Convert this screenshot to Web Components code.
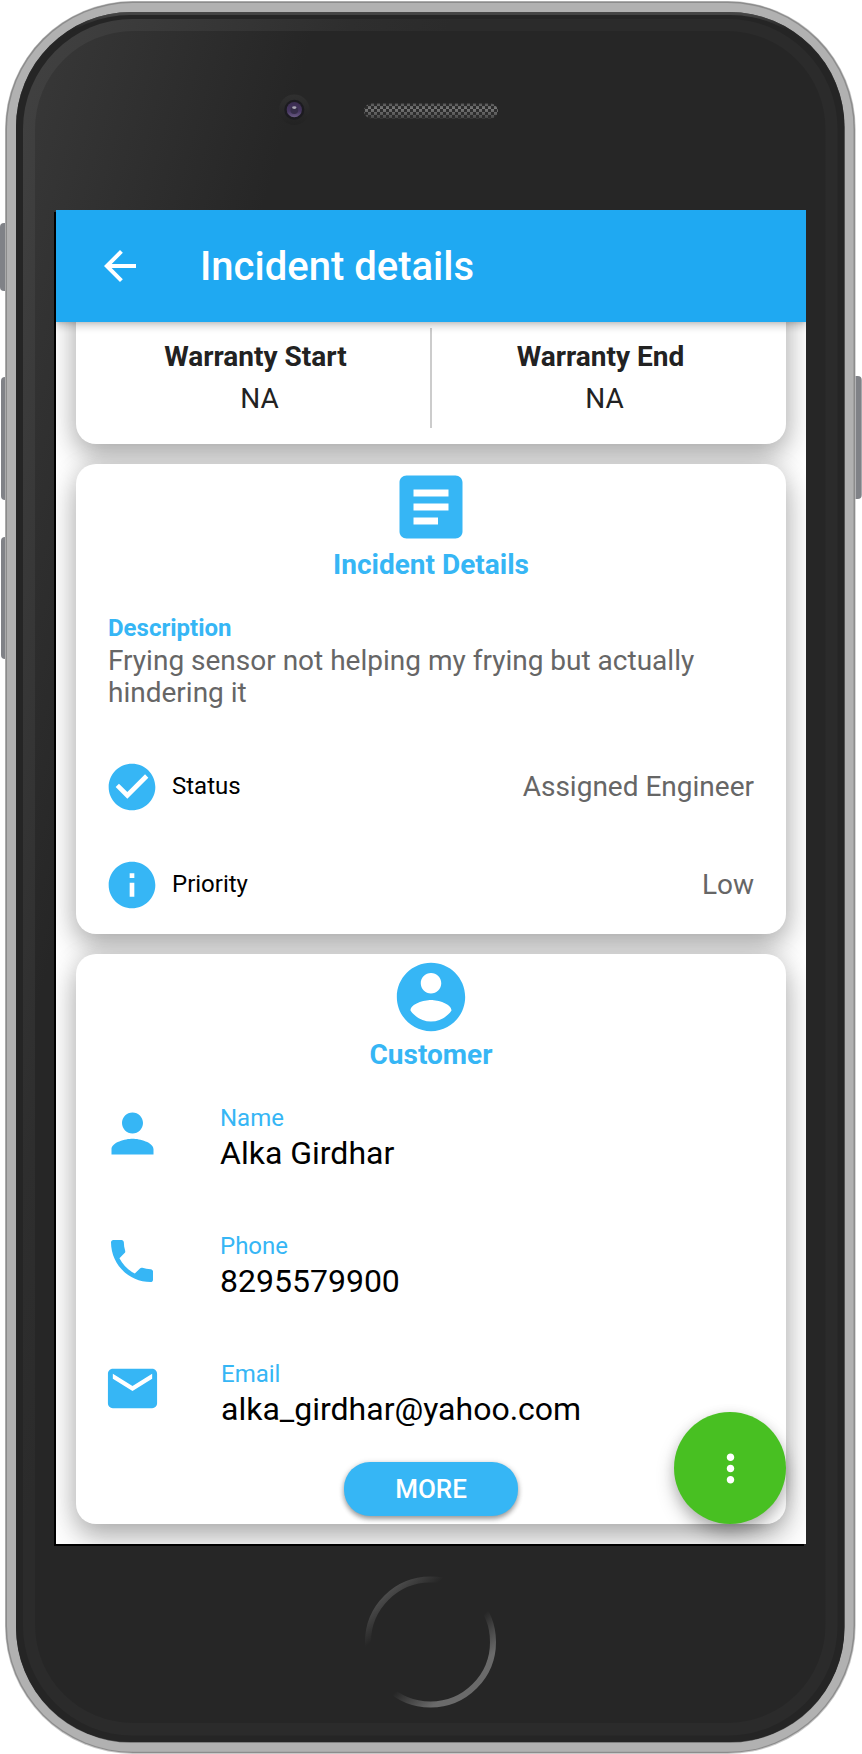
<!DOCTYPE html>
<html lang="en">
<head>
<meta charset="utf-8">
<title>Incident details</title>
<style>
  html, body { margin: 0; background: #fff; }
  body { font-family: Roboto, "Liberation Sans", sans-serif; width: 862px; height: 1754px; overflow: hidden; }
</style>
</head>
<body>
<phone-frame>
  <app-bar>Incident details</app-bar>
  <scroll-area>
    <info-card class="scrolled">
      <warranty-dates>
        <date-cell label="Warranty Start" value="NA"></date-cell>
        <date-cell label="Warranty End" value="NA"></date-cell>
      </warranty-dates>
    </info-card>
    <info-card>
      <card-heading icon="article" size="84">Incident Details</card-heading>
      <text-block label="Description">Frying sensor not helping my frying but actually hindering it</text-block>
      <status-row icon="check" label="Status">Assigned Engineer</status-row>
      <status-row icon="info" label="Priority">Low</status-row>
    </info-card>
    <info-card>
      <card-heading icon="account" size="82">Customer</card-heading>
      <contact-list>
        <contact-row icon="person" size="63" label="Name">Alka Girdhar</contact-row>
        <contact-row icon="phone" size="56" label="Phone">8295579900</contact-row>
        <contact-row icon="mail" size="59" label="Email" style="--indent:1px;--icon-box:57px">alka_girdhar@yahoo.com</contact-row>
      </contact-list>
      <pill-button>MORE</pill-button>
    </info-card>
  </scroll-area>
  <action-button></action-button>
</phone-frame>

<script>
const define = (name, markup) => customElements.define(name, class extends HTMLElement {
  constructor() {
    super();
    const root = this.attachShadow({ mode: 'open' });
    const tpl = document.createElement('template');
    tpl.innerHTML = typeof markup === 'function' ? markup(this) : markup;
    root.append(tpl.content.cloneNode(true));
  }
});
const attr = (el, n) => el.getAttribute(n) || '';

const ICONS = {
  back: 'M20 11H7.83l5.59-5.59L12 4l-8 8 8 8 1.41-1.41L7.83 13H20v-2z',
  article: 'M19 3H5c-1.1 0-2 .9-2 2v14c0 1.1.9 2 2 2h14c1.1 0 2-.9 2-2V5c0-1.1-.9-2-2-2zm-5 14H7v-2h7v2zm3-4H7v-2h10v2zm0-4H7V7h10v2z',
  check: 'M12 2C6.48 2 2 6.48 2 12s4.48 10 10 10 10-4.48 10-10S17.52 2 12 2zm-2 15l-5-5 1.41-1.41L10 14.17l7.59-7.59L19 8l-9 9z',
  info: 'M12 2C6.48 2 2 6.48 2 12s4.48 10 10 10 10-4.48 10-10S17.52 2 12 2zm1 15h-2v-6h2v6zm0-8h-2V7h2v2z',
  account: 'M12 2C6.48 2 2 6.48 2 12s4.48 10 10 10 10-4.48 10-10S17.52 2 12 2zm0 3c1.66 0 3 1.34 3 3s-1.34 3-3 3-3-1.34-3-3 1.34-3 3-3zm0 14.2c-2.5 0-4.71-1.28-6-3.22.03-1.99 4-3.08 6-3.08 1.99 0 5.97 1.09 6 3.08-1.29 1.94-3.5 3.22-6 3.22z',
  person: 'M12 12c2.21 0 4-1.79 4-4s-1.79-4-4-4-4 1.79-4 4 1.79 4 4 4zm0 2c-2.67 0-8 1.34-8 4v2h16v-2c0-2.66-5.33-4-8-4z',
  phone: 'M6.62 10.79c1.44 2.83 3.76 5.14 6.59 6.59l2.2-2.2c.27-.27.67-.36 1.02-.24 1.12.37 2.33.57 3.57.57.55 0 1 .45 1 1V20c0 .55-.45 1-1 1-9.39 0-17-7.61-17-17 0-.55.45-1 1-1h3.5c.55 0 1 .45 1 1 0 1.25.2 2.45.57 3.57.11.35.03.74-.25 1.02l-2.2 2.2z',
  mail: 'M20 4H4c-1.1 0-1.99.9-1.99 2L2 18c0 1.1.9 2 2 2h16c1.1 0 2-.9 2-2V6c0-1.1-.9-2-2-2zm0 4l-8 5-8-5V6l8 5 8-5v2z',
  more: 'M12 8c1.1 0 2-.9 2-2s-.9-2-2-2-2 .9-2 2 .9 2 2 2zm0 2c-1.1 0-2 .9-2 2s.9 2 2 2 2-.9 2-2-.9-2-2-2zm0 6c-1.1 0-2 .9-2 2s.9 2 2 2 2-.9 2-2-.9-2-2-2z'
};

define('md-icon', el => `
  <style>:host{display:block;flex:none;width:${attr(el,'size')}px;height:${attr(el,'size')}px}
  svg{display:block;width:100%;height:100%;fill:currentColor}</style>
  <svg viewBox="0 0 24 24"><path d="${ICONS[attr(el,'name')]}"/></svg>`);

define('phone-frame', `
  <style>
    :host{display:grid;width:862px;height:1754px}
    svg,.screen{grid-area:1/1}
    svg{display:block}
    .screen{position:relative;margin:210px 0 0 56px;width:750px;height:1334px;background:#fff;overflow:hidden;display:flex;flex-direction:column}
  </style>
  <svg width="862" height="1754" viewBox="0 0 862 1754">
    <defs>
      <linearGradient id="glass" gradientUnits="userSpaceOnUse" x1="35" y1="31" x2="293" y2="104">
        <stop offset="0" stop-color="#383838"/><stop offset="1" stop-color="#262626"/></linearGradient>
      <linearGradient id="rim" gradientUnits="userSpaceOnUse" x1="30" y1="100" x2="400" y2="205">
        <stop offset="0" stop-color="#404040"/><stop offset=".75" stop-color="#2e2e2e"/><stop offset="1" stop-color="#2b2b2b"/></linearGradient>
      <linearGradient id="edge" gradientUnits="userSpaceOnUse" x1="0" y1="12" x2="0" y2="60">
        <stop offset="0" stop-color="#484848"/><stop offset=".35" stop-color="#262626"/></linearGradient>
      <linearGradient id="home" gradientUnits="userSpaceOnUse" x1="387.2" y1="1593" x2="473.8" y2="1691">
        <stop offset="0" stop-color="#4c4c4c"/><stop offset=".2" stop-color="#262626"/>
        <stop offset=".61" stop-color="#262626"/><stop offset=".88" stop-color="#6a6a6a"/></linearGradient>
      <linearGradient id="ring" x1="0" y1="0" x2="0" y2="1"><stop offset="0" stop-color="#303030"/><stop offset="1" stop-color="#222"/></linearGradient>
      <linearGradient id="lens" x1="0" y1="0" x2="0" y2="1"><stop offset="0" stop-color="#3a2c50"/><stop offset=".6" stop-color="#463660"/><stop offset="1" stop-color="#6a5b84"/></linearGradient>
      <linearGradient id="dots" gradientUnits="userSpaceOnUse" x1="0" y1="103" x2="0" y2="119">
        <stop offset="0" stop-color="#505050"/><stop offset=".35" stop-color="#777"/><stop offset="1" stop-color="#444"/></linearGradient>
      <pattern id="mesh" width="6" height="6" patternUnits="userSpaceOnUse" x="365" y="103">
        <rect width="6" height="6" fill="#000"/><rect width="3" height="3" fill="#fff"/><rect x="3" y="3" width="3" height="3" fill="#fff"/></pattern>
      <mask id="meshmask"><rect x="364" y="103.5" width="134" height="15" rx="7.5" fill="url(#mesh)"/></mask>
    </defs>
    <g fill="#808287">
      <rect x="0" y="223" width="12" height="68" rx="4"/>
      <rect x="1" y="377" width="12" height="123" rx="4"/>
      <rect x="1" y="537" width="12" height="122" rx="4"/>
      <rect x="849" y="376" width="12.7" height="123" rx="4"/>
    </g>
    <rect x="5" y="1" width="850.7" height="1753" rx="128" fill="#c8c8c8"/>
    <rect x="5.5" y="1.5" width="849.5" height="1751.5" rx="127.5" fill="#8c8c8c"/>
    <rect x="7" y="3" width="846.5" height="1748.8" rx="126" fill="#b1b1b1"/>
    <rect x="16" y="12" width="828.5" height="1730.6" rx="115" fill="#505050"/>
    <rect x="16" y="12" width="828.5" height="1730" rx="115" fill="url(#edge)"/>
    <rect x="16.5" y="15" width="827.5" height="1726.6" rx="114" fill="#252525"/>
    <rect x="23" y="19" width="814.5" height="1716.5" rx="110" fill="url(#rim)"/>
    <rect x="35" y="31" width="790.5" height="1692" rx="98" fill="url(#glass)"/>
    <circle cx="294.3" cy="109.7" r="15.3" fill="url(#ring)"/>
    <circle cx="294.3" cy="109.7" r="10" fill="#1c1b20"/>
    <circle cx="294.3" cy="109.7" r="7.6" fill="url(#lens)"/>
    <circle cx="294.3" cy="110.2" r="3.8" fill="#352d48"/>
    <ellipse cx="294.3" cy="107.6" rx="2.2" ry="1.3" fill="#aaa6b4"/>
    <rect x="364" y="103.5" width="134" height="15" rx="7.5" fill="#2c2c2c"/>
    <rect x="364" y="103" width="134" height="16" fill="url(#dots)" mask="url(#meshmask)"/>
    <circle cx="430.5" cy="1642" r="62.5" fill="none" stroke="url(#home)" stroke-width="6"/>
    <rect x="54" y="212" width="750" height="1334" fill="#000"/>
  </svg>
  <div class="screen"><slot></slot></div>`);

define('app-bar', `
  <style>
    :host{display:flex;align-items:center;flex:none;height:112px;box-sizing:border-box;padding-left:40px;gap:56px;
      background:#1fa9f2;color:#fff;position:relative;z-index:1;
      box-shadow:0 4px 8px rgba(0,0,0,.2),0 0 4px rgba(0,0,0,.14)}
    span{font-size:40px;font-weight:500;line-height:48px;padding-top:2px;white-space:nowrap}
  </style>
  <md-icon name="back" size="48"></md-icon><span><slot></slot></span>`);

define('scroll-area', `
  <style>:host{display:flex;flex-direction:column;gap:20px;padding:0 20px 20px;flex:1;min-height:0;box-sizing:border-box}</style>
  <slot></slot>`);

define('info-card', `
  <style>
    :host{display:flex;flex-direction:column;flex:none;background:#fff;border-radius:20px;
      box-shadow:0 14px 30px rgba(0,0,0,.27),0 2px 24px rgba(0,0,0,.13)}
    :host(.scrolled){margin-top:-60px;padding-top:60px}
  </style>
  <slot></slot>`);

define('warranty-dates', `
  <style>:host{display:grid;grid-template-columns:1fr 1fr;height:100px;padding:6px 0 16px;
    background:linear-gradient(#ccc,#ccc) 354px 6px/2px 100px no-repeat}</style>
  <slot></slot>`);

define('date-cell', el => `
  <style>
    :host{display:flex;flex-direction:column;align-items:center;color:#222;font-size:28px;padding-top:13px}
    :host(:first-child){padding-left:4px}
    :host(:last-child){padding-right:16px}
    b,span{line-height:32px}
    span{margin:10px 0 0 8px}
  </style>
  <b>${attr(el,'label')}</b><span>${attr(el,'value')}</span>`);

define('card-heading', el => `
  <style>
    :host{display:flex;flex-direction:column;align-items:center;color:#36b6f5}
    .icon{height:84px;display:flex;align-items:center;padding-top:1px}
    b{font-size:28px;line-height:32px}
  </style>
  <div class="icon"><md-icon name="${attr(el,'icon')}" size="${attr(el,'size')}"></md-icon></div><b><slot></slot></b>`);

define('text-block', el => `
  <style>
    :host{display:block;margin:33px 32px 29px}
    b{display:block;font-size:24px;line-height:28px;color:#36b6f5;margin-bottom:3px}
    p{margin:0;font-size:28px;line-height:32px;color:#666}
  </style>
  <b>${attr(el,'label')}</b><p><slot></slot></p>`);

define('status-row', el => `
  <style>
    :host{display:flex;align-items:center;height:98px;padding:0 32px 0 28px;font-size:28px;color:#666}
    md-icon{color:#36b6f5}
    .label{font-size:24px;color:#000;margin-left:12px;padding-bottom:2px;flex:1}
    .value{padding-bottom:2px}
  </style>
  <md-icon name="${attr(el,'icon')}" size="56"></md-icon>
  <span class="label">${attr(el,'label')}</span><span class="value"><slot></slot></span>`);

define('contact-list', `
  <style>:host{display:flex;flex-direction:column;gap:58px;margin-top:33px}</style><slot></slot>`);

define('contact-row', el => `
  <style>
    :host{display:grid;grid-template-columns:64px 1fr;column-gap:56px;height:70px;padding-left:24px}
    .icon{height:var(--icon-box,58px);display:grid;place-content:center;color:#36b6f5}
    .text{padding-left:var(--indent,0)}
    small{display:block;font-size:24px;line-height:28px;margin-bottom:2px;color:#36b6f5}
    span{display:block;font-size:32px;line-height:38px;color:#000}
  </style>
  <div class="icon"><md-icon name="${attr(el,'icon')}" size="${attr(el,'size')}"></md-icon></div>
  <div class="text"><small>${attr(el,'label')}</small><span><slot></slot></span></div>`);

define('pill-button', `
  <style>
    :host{display:flex;align-items:center;justify-content:center;align-self:center;width:174px;height:54px;margin:32px 0 8px;
      border-radius:26px;background:#36b6f5;color:#fff;font-size:26px;font-weight:500;
      box-shadow:0 3px 5px rgba(0,0,0,.32),0 1px 6px rgba(0,0,0,.16)}
  </style>
  <slot></slot>`);

define('action-button', `
  <style>
    :host{position:absolute;right:20px;bottom:20px;width:112px;height:112px;border-radius:50%;
      display:grid;place-content:center;background:#48c022;color:#fff;z-index:2;
      box-shadow:0 10px 18px rgba(0,0,0,.26),0 2px 12px rgba(0,0,0,.1)}
  </style>
  <md-icon name="more" size="45"></md-icon>`);
</script>
</body>
</html>
